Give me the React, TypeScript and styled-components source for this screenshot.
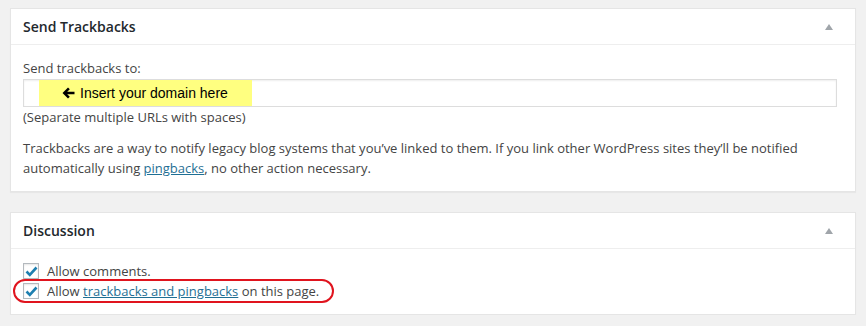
import React from 'react';
import styled, { createGlobalStyle } from 'styled-components';

const GlobalStyle = createGlobalStyle`
  html, body {
    margin: 0;
    padding: 0;
    background: #f1f1f1;
  }
  body {
    font-family: 'Open Sans', 'DejaVu Sans', sans-serif;
    font-size: 13px;
    color: #444;
  }
`;

const Page = styled.div`
  padding: 8px 10px 0 10px;
  display: flex;
  flex-direction: column;
  gap: 20px;
`;

const Postbox = styled.div`
  position: relative;
  background: #fff;
  border: 1px solid #e5e5e5;
  box-shadow: 0 1px 1px rgba(0, 0, 0, 0.04);
`;

const BoxHeader = styled.div`
  display: flex;
  align-items: center;
  justify-content: space-between;
  height: 35px;
  padding: 0 12px;
  border-bottom: 1px solid #eee;
`;

const BoxTitle = styled.h2`
  margin: 0;
  font-size: 14px;
  font-weight: 600;
  color: #23282d;
  line-height: 1.4;
`;

const Toggle = styled.span`
  width: 0;
  height: 0;
  margin-right: 10px;
  border-left: 4px solid transparent;
  border-right: 4px solid transparent;
  border-bottom: 6px solid #a0a5aa;
`;

const Inside = styled.div<{ $top: number; $bottom: number }>`
  padding: ${p => p.$top}px 12px ${p => p.$bottom}px 12px;
  line-height: 18px;
`;

const Label = styled.div`
  margin-bottom: 2px;
`;

const UrlInput = styled.div`
  box-sizing: border-box;
  width: 814px;
  height: 28px;
  border: 1px solid #ddd;
  box-shadow: inset 0 1px 2px rgba(0, 0, 0, 0.07);
  padding: 0 0 0 15px;
  display: flex;
  align-items: center;
`;

const Highlight = styled.div`
  height: 26px;
  width: 213px;
  background: #ffff80;
  display: flex;
  align-items: center;
  gap: 5px;
  padding-left: 23px;
  box-sizing: border-box;
  font-family: 'Liberation Sans', Arial, sans-serif;
  font-size: 14px;
  color: #000;
`;

const Howto = styled.div`
  margin-top: 1px;
`;

const Para = styled.p`
  margin: 13px 0 0 0;
  line-height: 19.5px;
  width: 800px;
`;

const Link = styled.a`
  color: #1f6f94;
  text-decoration: underline;
`;

const CheckRow = styled.label`
  display: flex;
  align-items: center;
  height: 20px;
  gap: 8px;
`;

const CheckBox = styled.span`
  box-sizing: border-box;
  width: 16px;
  height: 16px;
  border: 1px solid #b4b9be;
  background: #fff;
  box-shadow: inset 0 1px 2px rgba(0, 0, 0, 0.1);
  display: flex;
  align-items: center;
  justify-content: center;
`;

const Callout = styled.div`
  position: absolute;
  left: 2px;
  top: 66px;
  width: 321px;
  height: 24px;
  border: 2.5px solid #e0141e;
  border-radius: 14px;
  box-sizing: border-box;
  pointer-events: none;
`;

const Check = () => (
  <svg width="13" height="11" viewBox="0 0 13 11">
    <path d="M1.5 5.5 L4.8 8.8 L11.5 1.5" fill="none" stroke="#1e7fb0" strokeWidth="2.6" />
  </svg>
);

const BoldArrow = () => (
  <svg width="13" height="12" viewBox="0 0 13 12">
    <path d="M0.5 6 L6 0.5 L7.8 2.3 L5.2 4.7 H12.5 V7.3 H5.2 L7.8 9.7 L6 11.5 Z" fill="#000" />
  </svg>
);

export default function App() {
  return (
    <>
      <GlobalStyle />
      <Page>
        <Postbox>
          <BoxHeader>
            <BoxTitle>Send Trackbacks</BoxTitle>
            <Toggle />
          </BoxHeader>
          <Inside $top={14} $bottom={13}>
            <Label>Send trackbacks to:</Label>
            <UrlInput>
              <Highlight>
                <BoldArrow />
                <span>Insert your domain here</span>
              </Highlight>
            </UrlInput>
            <Howto>(Separate multiple URLs with spaces)</Howto>
            <Para>
              Trackbacks are a way to notify legacy blog systems that you’ve linked to them. If you link other
              WordPress sites they’ll be notified automatically using <Link href="#">pingbacks</Link>, no other
              action necessary.
            </Para>
          </Inside>
        </Postbox>
        <Postbox>
          <BoxHeader>
            <BoxTitle>Discussion</BoxTitle>
            <Toggle />
          </BoxHeader>
          <Inside $top={12} $bottom={13}>
            <CheckRow>
              <CheckBox><Check /></CheckBox>
              <span>Allow comments.</span>
            </CheckRow>
            <CheckRow>
              <CheckBox><Check /></CheckBox>
              <span>
                Allow <Link href="#">trackbacks and pingbacks</Link> on this page.
              </span>
            </CheckRow>
          </Inside>
          <Callout />
        </Postbox>
      </Page>
    </>
  );
}
